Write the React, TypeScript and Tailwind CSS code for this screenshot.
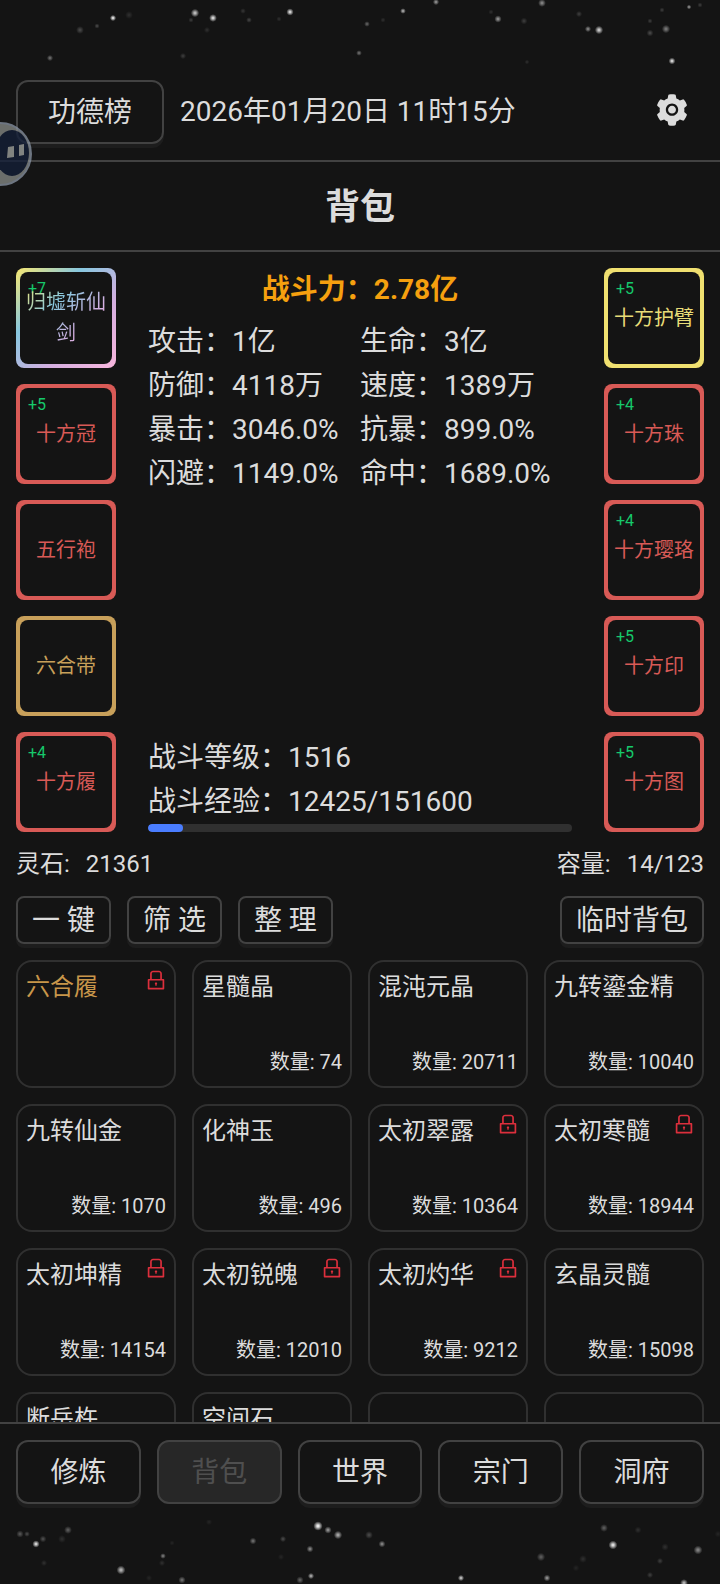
import { useState } from 'react';
import clsx from 'clsx';
import { AiFillSetting, AiOutlineLock } from 'react-icons/ai';

type Quality = 'rainbow' | 'yellow' | 'red' | 'gold';

interface Equipment {
  name: string;
  quality: Quality;
  level?: number;
}

interface Item {
  name: string;
  count?: number;
  locked?: boolean;
  gold?: boolean;
}

const leftSlots: Equipment[] = [
  { name: '归墟斩仙剑', quality: 'rainbow', level: 7 },
  { name: '十方冠', quality: 'red', level: 5 },
  { name: '五行袍', quality: 'red' },
  { name: '六合带', quality: 'gold' },
  { name: '十方履', quality: 'red', level: 4 },
];

const rightSlots: Equipment[] = [
  { name: '十方护臂', quality: 'yellow', level: 5 },
  { name: '十方珠', quality: 'red', level: 4 },
  { name: '十方璎珞', quality: 'red', level: 4 },
  { name: '十方印', quality: 'red', level: 5 },
  { name: '十方图', quality: 'red', level: 5 },
];

const stats = [
  ['攻击', '1亿'],
  ['生命', '3亿'],
  ['防御', '4118万'],
  ['速度', '1389万'],
  ['暴击', '3046.0%'],
  ['抗暴', '899.0%'],
  ['闪避', '1149.0%'],
  ['命中', '1689.0%'],
];

const items: Item[] = [
  { name: '六合履', locked: true, gold: true },
  { name: '星髓晶', count: 74 },
  { name: '混沌元晶', count: 20711 },
  { name: '九转鎏金精', count: 10040 },
  { name: '九转仙金', count: 1070 },
  { name: '化神玉', count: 496 },
  { name: '太初翠露', count: 10364, locked: true },
  { name: '太初寒髓', count: 18944, locked: true },
  { name: '太初坤精', count: 14154, locked: true },
  { name: '太初锐魄', count: 12010, locked: true },
  { name: '太初灼华', count: 9212, locked: true },
  { name: '玄晶灵髓', count: 15098 },
  { name: '断岳杵' },
  { name: '空间石' },
  { name: '' },
  { name: '' },
];

const tabs = ['修炼', '背包', '世界', '宗门', '洞府'];

const exp = { current: 12425, max: 151600 };

// x, y, radius, opacity
const topStars = [
  [113, 18, 2.4, 0.85], [129, 15, 3, 0.1], [97, 26, 2, 0.2], [80, 30, 3, 0.2], [50, 58, 2.4, 0.35],
  [195, 13, 3.2, 0.7], [213, 18, 3, 0.8], [191, 20, 2, 0.15], [207, 30, 2.4, 0.1], [183, 56, 2.4, 0.15],
  [243, 11, 2.2, 0.12], [249, 20, 2.2, 0.18], [290, 12, 2.8, 0.8], [279, 19, 2, 0.1], [359, 53, 2.2, 0.35],
  [367, 24, 2.2, 0.3], [383, 20, 2, 0.1], [403, 11, 2.2, 0.6], [436, 2, 2.4, 0.5], [498, 19, 2.8, 0.5],
  [491, 12, 2, 0.1], [524, 21, 2.6, 0.15], [542, 3, 3, 0.45], [579, 14, 2.4, 0.15], [588, 29, 2.4, 0.45],
  [599, 30, 3.2, 0.75], [650, 21, 2, 0.15], [650, 33, 2.6, 0.2], [662, 10, 2, 0.15], [666, 29, 3.2, 0.4],
  [672, 61, 2.6, 0.8], [689, 7, 1.8, 0.5], [700, 5, 2, 0.15], [527, 62, 1.8, 0.1],
];

const bottomStars = [
  [20, 14, 2.8, 0.25], [27, 14, 2.2, 0.2], [36, 24, 2.8, 0.8], [43, 19, 2.6, 0.22], [62, 19, 3, 0.1],
  [68, 10, 3, 0.28], [44, 43, 2.4, 0.1], [121, 50, 3.4, 0.65], [149, 58, 2.4, 0.06], [162, 43, 2.4, 0.1],
  [163, 36, 2.2, 0.4], [182, 60, 2.8, 0.35], [172, 23, 2, 0.06], [209, 2, 2.4, 0.06], [253, 21, 2.6, 0.35],
  [283, 19, 2.4, 0.2], [281, 37, 2.4, 0.06], [300, 60, 2.8, 0.3], [310, 29, 2.6, 0.45], [311, 56, 2.4, 0.6],
  [318, 6, 3.6, 0.9], [328, 10, 2.8, 0.5], [338, 15, 3.2, 0.6], [369, 15, 3, 0.2], [382, 24, 2.6, 0.45],
  [461, 58, 2.4, 0.7], [541, 37, 3.2, 0.28], [547, 58, 2.6, 0.5], [576, 48, 2.6, 0.06], [583, 39, 3, 0.1],
  [604, 8, 3, 0.28], [613, 25, 3.4, 0.85], [638, 10, 2.6, 0.1], [650, 55, 2.4, 0.15], [660, 41, 2.4, 0.15],
  [665, 27, 2.8, 0.1], [684, 63, 3, 0.65], [698, 30, 3.4, 0.45], [718, 14, 2.6, 0.06],
];

function Starfield({ stars, id }: { stars: number[][]; id: string }) {
  return (
    <svg viewBox="0 0 720 64" preserveAspectRatio="xMidYMid slice" className="h-16 w-full shrink-0" aria-hidden="true">
      <radialGradient id={id}>
        <stop offset="0.2" stopColor="#fff" />
        <stop offset="1" stopColor="#fff" stopOpacity="0" />
      </radialGradient>
      {stars.map(([x, y, r, o]) => (
        <circle key={`${x}-${y}`} cx={x} cy={y} r={r * 1.3} fill={`url(#${id})`} opacity={o} />
      ))}
    </svg>
  );
}

const frameColor: Record<Quality, string> = {
  rainbow: 'bg-[linear-gradient(135deg,#f8e870_0%,#87c7df_33%,#d4aee0_66%,#f8b6dc_100%)]',
  yellow: 'bg-[#f0e070]',
  red: 'bg-[#d85a56]',
  gold: 'bg-[#c8a05a]',
};

const nameColor: Record<Quality, string> = {
  rainbow:
    'bg-[linear-gradient(135deg,#f8e870_0%,#87c7df_33%,#d4aee0_66%,#f8b6dc_100%)] bg-clip-text text-transparent',
  yellow: 'text-[#e8dc78]',
  red: 'text-[#d85a56]',
  gold: 'text-[#c8a05a]',
};

function Slot({ name, quality, level }: Equipment) {
  return (
    <button type="button" className={clsx('block size-[100px] rounded-lg p-1', frameColor[quality])}>
      <span className="relative flex size-full items-center justify-center rounded-lg bg-[#141414]">
        {level && <span className="absolute top-2 left-2 text-base leading-[18px] text-[#16c96b]">+{level}</span>}
        <span className={clsx('relative text-center text-xl leading-[31px]', nameColor[quality])}>{name}</span>
      </span>
    </button>
  );
}

function ItemCard({ name, count, locked, gold }: Item) {
  return (
    <li className="relative flex h-32 flex-col justify-between rounded-2xl border-2 border-[#303030] p-2">
      <span className={clsx('text-2xl leading-[34px] whitespace-nowrap', gold && 'text-[#c8964a]')}>{name}</span>
      {count && <span className="text-right text-xl leading-8">数量: {count}</span>}
      {locked && <AiOutlineLock className="absolute top-1.5 right-1.5 size-6 text-[#dc2f3c]" />}
    </li>
  );
}

const buttonBase = 'border-2 border-[#424242] pt-0.5 text-[28px] whitespace-nowrap';

function ToolButton({ children }: { children: string }) {
  return (
    <button type="button" className={clsx(buttonBase, 'h-12 rounded-lg px-3.5 leading-10 shadow-[0_4px_0_#1d1d1d]')}>
      {children}
    </button>
  );
}

// 悬浮球
function FloatingBall() {
  return (
    <svg viewBox="0 0 34 66" className="absolute top-[121px] left-0 h-[66px] w-[34px] opacity-75" aria-hidden="true">
      <circle cx="0" cy="33" r="31" fill="#888c89" stroke="#8b96a6" strokeWidth="2" />
      <ellipse cx="12" cy="32" rx="17" ry="23" fill="#131f39" />
      <path d="M8 26l6-1v11l-7 1z M19 24l5-1v11l-5 1z" fill="#a5a8a5" />
    </svg>
  );
}

export default function App() {
  const [active, setActive] = useState('背包');

  return (
    <div
      lang="zh-CN"
      className="relative flex h-screen flex-col overflow-hidden bg-[#141414] font-[Roboto,'Noto_Sans_CJK_SC',sans-serif] text-[#dcdcdc]"
    >
      <Starfield stars={topStars} id="star-top" />

      {/* 顶栏 */}
      <header className="flex items-center gap-4 border-b-2 border-[#424242] px-4 py-4">
        <button
          type="button"
          className={clsx(buttonBase, 'h-16 rounded-xl px-[30px] leading-[44px] shadow-[0_4px_0_#1d1d1d]')}
        >
          功德榜
        </button>
        <time className="flex-1 text-[28px] leading-[44px] whitespace-nowrap">2026年01月20日 11时15分</time>
        <button type="button" aria-label="设置" className="flex size-16 items-center justify-center pb-1">
          <AiFillSetting className="size-9" />
        </button>
      </header>

      <h1 className="border-b-2 border-[#424242] pt-[18px] pb-3.5 text-center text-[35px] leading-[56px] font-bold">
        背包
      </h1>

      <main className="flex min-h-0 flex-1 flex-col px-4 pt-4">
        {/* 装备与属性 */}
        <section className="flex gap-8">
          <div className="flex flex-col gap-4">
            {leftSlots.map((slot) => (
              <Slot key={slot.name} {...slot} />
            ))}
          </div>

          <div className="flex min-w-0 flex-1 flex-col text-[28px] leading-[44px]">
            <p className="mb-2 text-center font-bold text-[#f5a00f]">战斗力：2.78亿</p>
            <dl className="grid grid-cols-2">
              {stats.map(([label, value]) => (
                <div key={label} className="flex whitespace-nowrap">
                  <dt>{label}：</dt>
                  <dd>{value}</dd>
                </div>
              ))}
            </dl>
            <div className="mt-auto">
              <p>战斗等级：1516</p>
              <p>
                战斗经验：{exp.current}/{exp.max}
              </p>
              <div className="h-2 overflow-hidden rounded-full bg-[#303030]">
                <div
                  className="h-full rounded-full bg-[#4a7dff]"
                  style={{ width: `${(exp.current / exp.max) * 100}%` }}
                />
              </div>
            </div>
          </div>

          <div className="flex flex-col gap-4">
            {rightSlots.map((slot) => (
              <Slot key={slot.name} {...slot} />
            ))}
          </div>
        </section>

        <div className="flex h-16 shrink-0 items-center justify-between text-2xl">
          <p className="flex gap-4">
            <span>灵石:</span>
            <span>21361</span>
          </p>
          <p className="flex gap-4">
            <span>容量:</span>
            <span>14/123</span>
          </p>
        </div>

        <div className="flex gap-4">
          <ToolButton>一 键</ToolButton>
          <ToolButton>筛 选</ToolButton>
          <ToolButton>整 理</ToolButton>
          <div className="ml-auto">
            <ToolButton>临时背包</ToolButton>
          </div>
        </div>

        {/* 物品列表 */}
        <ul className="mt-4 grid min-h-0 flex-1 auto-rows-max grid-cols-4 gap-4 overflow-hidden">
          {items.map((item, i) => (
            <ItemCard key={i} {...item} />
          ))}
        </ul>
      </main>

      <nav className="flex gap-4 border-t-2 border-[#424242] p-4">
        {tabs.map((tab) => (
          <button
            key={tab}
            type="button"
            disabled={tab === active}
            onClick={() => setActive(tab)}
            className={clsx(
              buttonBase,
              'h-16 flex-1 rounded-xl leading-[44px]',
              tab === active ? 'bg-[#272727] text-[#4f4f4f]' : 'shadow-[0_4px_0_#1d1d1d]'
            )}
          >
            {tab}
          </button>
        ))}
      </nav>

      <Starfield stars={bottomStars} id="star-bottom" />
      <FloatingBall />
    </div>
  );
}
